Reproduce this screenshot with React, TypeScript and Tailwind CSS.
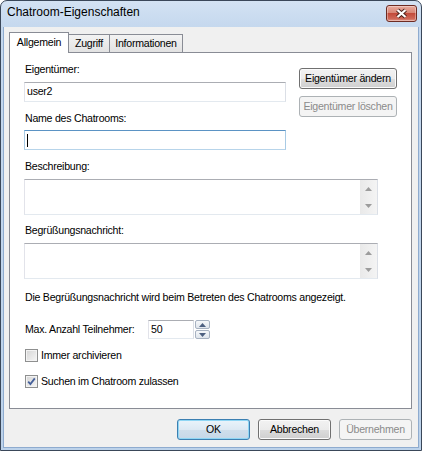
import React from 'react'

type BtnProps = { children: React.ReactNode; variant?: 'normal' | 'default' | 'disabled'; className?: string }

function WinButton({ children, variant = 'normal', className = '' }: BtnProps) {
  const look =
    variant === 'default'
      ? 'border-[#3c7fb1] bg-[linear-gradient(180deg,#eaf4fb_0%,#dde9f3_50%,#cfdeeb_51%,#c6d8e8_100%)] shadow-[inset_0_0_0_1px_#8fd6f4] text-black'
      : variant === 'disabled'
        ? 'border-[#adb2b5] bg-[#f4f4f4] text-[#8b8b8b]'
        : 'border-[#707070] bg-[linear-gradient(180deg,#f2f2f2_0%,#ebebeb_50%,#dddddd_51%,#cfcfcf_100%)] shadow-[inset_0_0_0_1px_#fbfbfb] text-black'
  return (
    <div className={`flex h-[21px] items-center justify-center whitespace-nowrap rounded-[3px] border leading-[13px] ${look} ${className}`}>
      {children}
    </div>
  )
}

function Arrow({ up, color = '#9c9c9c' }: { up?: boolean; color?: string }) {
  return (
    <svg width="7" height="4" viewBox="0 0 7 4">
      {up ? <polygon points="0,4 7,4 3.5,0" fill={color} /> : <polygon points="0,0 7,0 3.5,4" fill={color} />}
    </svg>
  )
}

function TextArea() {
  return (
    <div className="mt-[6px] flex h-[36px] w-[354px] border border-[#abadb3] border-b-[#e3e9ef] border-l-[#e2e3ea] border-r-[#dbdfe6] bg-white">
      <div className="flex-1" />
      <div className="flex w-[17px] flex-col bg-[linear-gradient(90deg,#e9e9e9,#f4f4f4)]">
        <div className="flex flex-1 items-center justify-center">
          <Arrow up />
        </div>
        <div className="flex flex-1 items-center justify-center">
          <Arrow />
        </div>
      </div>
    </div>
  )
}

function CheckBox({ checked, label }: { checked?: boolean; label: string }) {
  return (
    <div className="flex h-[16px] items-center">
      <div className="ml-px flex h-[13px] w-[13px] items-center justify-center border border-[#8e8f8f] bg-[linear-gradient(135deg,#d5d5d5,#f6f6f6)] shadow-[inset_0_0_0_1px_#f3f3f3]">
        {checked && (
          <svg width="9" height="9" viewBox="0 0 9 9">
            <path d="M1.2 4.6 L3.4 7 L7.8 1.4" stroke="#45609a" strokeWidth="1.8" fill="none" />
          </svg>
        )}
      </div>
      <span className="ml-[3px] leading-[13px]">{label}</span>
    </div>
  )
}

export default function App() {
  return (
    <div className="h-[451px] w-[422px] overflow-hidden bg-white">
      <div className="flex h-full flex-col rounded-t-[7px] border border-[#3a4759] bg-[linear-gradient(180deg,#d3e2f3_0px,#c5d8ee_26px,#bcd2ea_100%)] font-['Liberation_Sans',Arial,sans-serif] text-[10.6px] tracking-[-0.25px] text-black">
        {/* title bar */}
        <div className="flex h-[26px] shrink-0 items-start justify-between pl-[6px] pr-[4px]">
          <span className="pt-[4px] text-[12px] leading-[15px] tracking-normal">Chatroom-Eigenschaften</span>
          <div className="mt-[4px] flex h-[17px] w-[31px] items-center justify-center rounded-[3px] border border-[#6d2b22] bg-[linear-gradient(180deg,#e9ab9e_0%,#d88676_45%,#c34b3b_50%,#cf6858_85%,#e2998a_100%)] shadow-[inset_0_0_0_1px_rgba(255,255,255,0.35)]">
            <svg width="13" height="11" viewBox="0 0 13 11">
              <path d="M2.5 2 L10.5 9 M10.5 2 L2.5 9" stroke="#4a1f19" strokeWidth="4.2" />
              <path d="M2.5 2 L10.5 9 M10.5 2 L2.5 9" stroke="#ffffff" strokeWidth="2.3" />
            </svg>
          </div>
        </div>

        {/* client area */}
        <div className="mx-[2px] mb-[2px] flex flex-1 flex-col border-x border-b border-[#8eabcf] bg-[#f0f0f0]">
          {/* tabs */}
          <div className="relative z-10 mt-[5px] flex h-[20px] items-end pl-[5px]">
            <div className="-mb-px flex h-[21px] w-[60px] items-center justify-center border border-b-0 border-[#898c95] bg-white pb-px">
              Allgemein
            </div>
            <div className="flex h-[18px] w-[41px] items-center justify-center border border-b-0 border-l-0 border-[#898c95] bg-[linear-gradient(180deg,#f3f3f3,#e2e2e2)]">
              Zugriff
            </div>
            <div className="flex h-[18px] w-[73px] items-center justify-center border border-b-0 border-l-0 border-[#898c95] bg-[linear-gradient(180deg,#f3f3f3,#e2e2e2)]">
              Informationen
            </div>
          </div>

          {/* tab panel */}
          <div className="ml-[5px] flex h-[357px] w-[403px] flex-col border border-[#898c95] bg-white px-[14px] pt-[10px]">
            <div className="flex">
              <div className="flex w-[262px] flex-col">
                <span className="ml-px h-[13px] leading-[13px]">Eigentümer:</span>
                <div className="mt-[6px] flex h-[20px] items-center border border-[#abadb3] border-b-[#e3e9ef] border-l-[#e2e3ea] border-r-[#dbdfe6] bg-white pl-[2px]">
                  user2
                </div>
                <span className="ml-px mt-[10px] h-[13px] leading-[13px]">Name des Chatrooms:</span>
                <div className="mt-[5px] flex h-[20px] items-center border border-[#5b93c4] border-b-[#b7d4ea] border-l-[#a9cbe5] border-r-[#a9cbe5] bg-white pl-[2px]">
                  <span className="h-[13px] w-px bg-black" />
                </div>
              </div>
              <div className="ml-[13px] mt-[5px] flex flex-col gap-[7px]">
                <WinButton className="w-[98px]">Eigentümer ändern</WinButton>
                <WinButton variant="disabled" className="w-[98px]">Eigentümer löschen</WinButton>
              </div>
            </div>

            <span className="ml-px mt-[10px] h-[13px] leading-[13px]">Beschreibung:</span>
            <TextArea />
            <span className="ml-px mt-[9px] h-[13px] leading-[13px]">Begrüßungsnachricht:</span>
            <TextArea />

            <span className="ml-px mt-[12px] h-[13px] leading-[13px]">
              Die Begrüßungsnachricht wird beim Betreten des Chatrooms angezeigt.
            </span>

            <div className="mt-[16px] flex h-[19px] items-center">
              <span className="ml-px w-[123px] leading-[13px]">Max. Anzahl Teilnehmer:</span>
              <div className="flex h-[19px] w-[46px] items-center border border-[#abadb3] border-b-[#e3e9ef] border-l-[#e2e3ea] border-r-[#dbdfe6] bg-white pl-[2px]">
                50
              </div>
              <div className="ml-px flex h-[19px] w-[15px] flex-col gap-px">
                <div className="flex flex-1 items-center justify-center rounded-[2px] border border-[#a7b2c1] bg-[linear-gradient(180deg,#f6f8fa,#dfe5ec)]">
                  <Arrow up color="#4d6080" />
                </div>
                <div className="flex flex-1 items-center justify-center rounded-[2px] border border-[#a7b2c1] bg-[linear-gradient(180deg,#f6f8fa,#dfe5ec)]">
                  <Arrow color="#4d6080" />
                </div>
              </div>
            </div>

            <div className="mt-[8px]">
              <CheckBox label="Immer archivieren" />
            </div>
            <div className="mt-[10px]">
              <CheckBox checked label="Suchen im Chatroom zulassen" />
            </div>
          </div>

          {/* dialog buttons */}
          <div className="mt-[10px] flex justify-end gap-[8px] pr-[6px]">
            <WinButton variant="default" className="w-[73px]">OK</WinButton>
            <WinButton className="w-[73px]">Abbrechen</WinButton>
            <WinButton variant="disabled" className="w-[73px]">Übernehmen</WinButton>
          </div>
        </div>
      </div>
    </div>
  )
}
